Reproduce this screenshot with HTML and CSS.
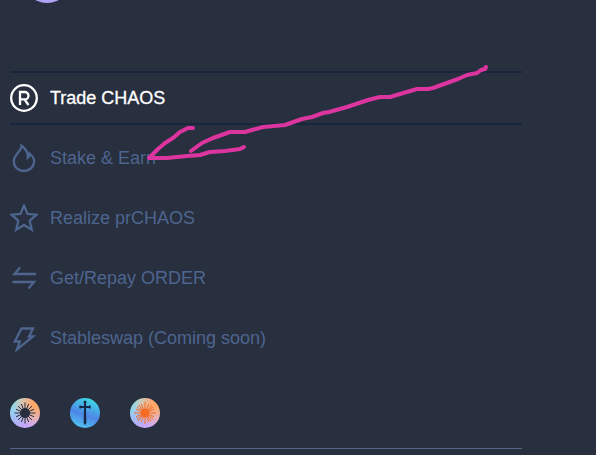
FILE: index.html
```html
<!DOCTYPE html>
<html lang="en">
<head>
<meta charset="utf-8">
<meta name="viewport" content="width=device-width, initial-scale=1">
<title>CHAOS</title>
<link rel="stylesheet" href="styles.css">
</head>
<body>
<aside class="sidebar">
  <header class="brand"><span class="brand-mark"></span></header>
  <nav class="menu">
    <a class="item active" href="#trade">
      <svg class="icon" viewBox="0 0 28 28" aria-hidden="true"><circle cx="14" cy="14" r="12.8"/><path d="M10 21V8h4.800a3.700 3.700 0 0 1 0 7.400h-4.800M14.500 15.400l4 5.600"/></svg>
      <span>Trade CHAOS</span>
    </a>
    <a class="item" href="#stake">
      <svg class="icon" viewBox="0 0 28 28" aria-hidden="true"><path d="M11.500 1.800c.5 5-7.700 8.500-7.700 15.400 0 5.700 4.500 9.800 10.200 9.800s10.200-4.200 10.200-9.900c0-3.100-1.700-5.100-4.600-7.600-.1 1.800-.4 3.400-1.800 4.400.4-4.900-2-9.100-6.300-12.100z"/></svg>
      <span>Stake &amp; Earn</span>
    </a>
    <a class="item" href="#realize">
      <svg class="icon" viewBox="0 0 28 28" aria-hidden="true"><path d="M14 1.500l3.500 8.500 9 .7-6.800 6 2.100 9-7.800-4.800-7.800 4.800 2.100-9-6.800-6 9-.7z"/></svg>
      <span>Realize prCHAOS</span>
    </a>
    <a class="item" href="#repay">
      <svg class="icon" viewBox="0 0 28 28" aria-hidden="true"><path d="M26 10H4.500l5.500-6.500M2.500 18H24l-5.500 6.500"/></svg>
      <span>Get/Repay ORDER</span>
    </a>
    <a class="item" href="#stableswap">
      <svg class="icon" viewBox="0 0 28 28" aria-hidden="true"><path d="M11.500 4.500h11.500l-4 8h4L7 25.500l2.800-8H4.800z"/></svg>
      <span>Stableswap (Coming soon)</span>
    </a>
  </nav>
  <footer class="tokens">
    <a class="token" href="#chaos" aria-label="CHAOS">
      <svg class="burst dark" viewBox="0 0 30 30"><circle cx="15" cy="15" r="4.500"/><path d="M15 4.500v21M4.500 15h21M8 8l14 14M22 8L8 22M11.300 6l7.400 18M18.700 6l-7.400 18M6 11.300l18 7.400M6 18.700l18-7.400"/></svg>
    </a>
    <a class="token order" href="#order" aria-label="ORDER">
      <svg class="sword" viewBox="0 0 30 30"><path d="M14 4h2v4h3l1-1 1 2-1 2-1-1h-3l.4 15-1.400 2-1.400-2 .4-15h-3l-1 1-1-2 1-2 1 1h3z"/><circle cx="15" cy="4" r="1.500"/></svg>
    </a>
    <a class="token" href="#prchaos" aria-label="prCHAOS">
      <svg class="burst orange" viewBox="0 0 30 30"><circle cx="15" cy="15" r="4"/><path d="M15 4v22M4 15h22M7 9l16 12M22 7L8 23M11.300 6l7.400 18M18.700 6l-7.400 18M6 11.300l18 7.400M6 18.700l18-7.400M9 7l12 16M23 9L7 21"/></svg>
    </a>
  </footer>
</aside>
<svg class="arrow" viewBox="140 60 350 100" aria-hidden="true">
  <path d="M486 67L485 69 481 70 477 73 467 75 458 79 433 88 428 89 417 89 400 94 390 97 380 97 368 100 347 107 329 112 323 113 312 117 302 119 285 125 263 127 252 130 245 132 230 132 213 138 202 143 191 151"/>
  <path d="M193 128L188 128 180 132 173 138 165 143 158 149 149 158 167 158 187 156 200 155 210 152 225 151 240 149 244 147"/>
</svg>
</body>
</html>
```
FILE: styles.css
```css
body {
  position: relative;
  margin: 0;
  background: #282f3e;
  font-family: "Liberation Sans", Arial, sans-serif;
  font-size: 18px;
  line-height: 24px;
}

.sidebar {
  margin: 0 74px 0 10px;
}

.brand {
  display: flex;
  height: 71px;
  padding-left: 12px;
  overflow: hidden;
}

.brand-mark {
  width: 50px;
  height: 50px;
  margin-top: -47px;
  border-radius: 50%;
  background: linear-gradient(90deg, #a9a0f5, #b7a7fa);
}

.menu {
  display: flex;
  flex-direction: column;
  gap: 6px;
}

.item {
  display: flex;
  align-items: center;
  gap: 12px;
  height: 50px;
  border: solid transparent;
  border-width: 2px 0;
  color: #4d658f;
  text-decoration: none;
}

.item.active {
  border-color: #17263d;
  color: #fff;
}

.active span {
  -webkit-text-stroke: 0.3px #fff;
}

.icon {
  width: 28px;
  height: 28px;
  fill: none;
  stroke: currentColor;
  stroke-width: 2.3;
}

.tokens {
  display: flex;
  gap: 30px;
  padding: 33px 0 20px;
  border-bottom: 1px solid #526584;
}

.token {
  width: 30px;
  height: 30px;
  border-radius: 50%;
  background:
    radial-gradient(circle at 85% 20%, #ffa869 10%, #ffb98a99 40%, transparent 65%),
    linear-gradient(150deg, #8fe0ea 15%, #9fc0f5 45%, #c4a6f8 75%, #d3b0f0);
}

.token.order {
  background: linear-gradient(200deg, #3fd0e4 15%, #4e86e8 55%, #50c3ef 90%);
}

.token svg {
  display: block;
}

.dark {
  color: #262e40;
}

.orange {
  color: #f56b24;
}

.burst {
  fill: currentColor;
  stroke: currentColor;
  stroke-width: 1;
}

.sword {
  fill: #172a48;
}

.arrow {
  position: absolute;
  left: 140px;
  top: 60px;
  width: 350px;
  height: 100px;
  fill: none;
  stroke: #dc359f;
  stroke-width: 4;
  stroke-linecap: round;
  stroke-linejoin: round;
  pointer-events: none;
}
```
